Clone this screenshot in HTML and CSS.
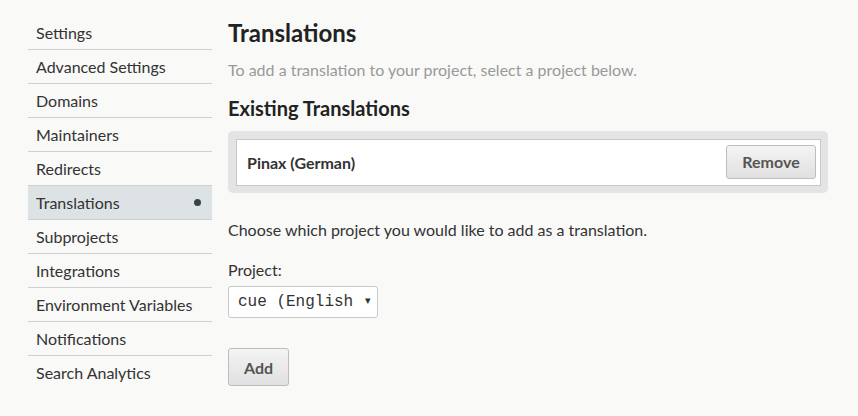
FILE: index.html
```html
<!DOCTYPE html>
<html lang="en">
<head>
    <meta charset="UTF-8">
    <title>Translations</title>
    <link rel="stylesheet" href="styles.css">
</head>
<body>
    <div class="page">
        <ul class="side-menu">
            <li><a href="#">Settings</a></li>
            <li><a href="#">Advanced Settings</a></li>
            <li><a href="#">Domains</a></li>
            <li><a href="#">Maintainers</a></li>
            <li><a href="#">Redirects</a></li>
            <li class="active"><a href="#">Translations</a></li>
            <li><a href="#">Subprojects</a></li>
            <li><a href="#">Integrations</a></li>
            <li><a href="#">Environment Variables</a></li>
            <li><a href="#">Notifications</a></li>
            <li><a href="#">Search Analytics</a></li>
        </ul>
        <div class="content">
            <h1>Translations</h1>
            <p class="help">To add a translation to your project, select a project below.</p>
            <h2>Existing Translations</h2>
            <div class="module">
                <div class="module-item">
                    <span class="item-name">Pinax (German)</span>
                    <button class="btn btn-remove">Remove</button>
                </div>
            </div>
            <p class="choose">Choose which project you would like to add as a translation.</p>
            <label for="project">Project:</label>
            <div class="select-wrap">
                <select id="project">
                    <option>cue (English)</option>
                </select>
                <span class="select-arrow">▾</span>
            </div>
            <button class="btn btn-add">Add</button>
        </div>
    </div>
</body>
</html>
```

FILE: styles.css
```css
body {
    margin: 0;
    background: #f9f9f8;
    font-family: Lato, "Open Sans", sans-serif;
    color: #333;
}
.page {
    display: flex;
    padding: 16px 30px 16px 28px;
    gap: 16px;
}
.side-menu {
    list-style: none;
    margin: 0;
    padding: 0;
    width: 184px;
    flex-shrink: 0;
}
.side-menu li {
    border-bottom: 1px solid #cfcfcf;
}
.side-menu li:last-child {
    border-bottom: none;
}
.side-menu a {
    display: block;
    height: 33px;
    line-height: 33px;
    padding: 0 8px;
    font-size: 16px;
    color: #333;
    text-decoration: none;
    position: relative;
}
.side-menu li.active a {
    background: #dde2e5;
}
.side-menu li.active a::after {
    content: "";
    position: absolute;
    right: 11px;
    top: 13px;
    width: 7px;
    height: 7px;
    border-radius: 50%;
    background: #3a4148;
}
.content {
    flex: 1;
}
h1 {
    margin: 2px 0 0;
    font-size: 24px;
    line-height: 30px;
    color: #222;
}
.help {
    margin: 12px 0 0;
    font-size: 16px;
    line-height: 20px;
    color: #999;
}
h2 {
    margin: 15px 0 0;
    font-size: 20px;
    line-height: 26px;
    color: #222;
}
.module {
    margin-top: 10px;
    background: #e4e4e4;
    border-radius: 5px;
    padding: 8px 7px 7px 8px;
}
.module-item {
    display: flex;
    align-items: center;
    justify-content: space-between;
    background: #fff;
    border: 1px solid #c8c8c8;
    height: 44px;
    padding: 0 4px 1px 10px;
}
.item-name {
    font-size: 16px;
    font-weight: bold;
}
.btn {
    font-family: Lato, "Open Sans", sans-serif;
    font-size: 16px;
    font-weight: bold;
    color: #555;
    background: linear-gradient(#f4f4f4, #e0e0e0);
    border: 1px solid #bdbdbd;
    border-radius: 3px;
    cursor: pointer;
}
.btn-remove {
    width: 90px;
    height: 34px;
    padding: 0 0 2px;
}
.choose {
    margin: 27px 0 0;
    font-size: 16px;
    line-height: 20px;
}
label {
    display: block;
    margin-top: 20px;
    font-size: 16px;
    line-height: 20px;
}
.select-wrap {
    margin-top: 6px;
    position: relative;
    width: 150px;
}
select {
    appearance: none;
    width: 150px;
    height: 32px;
    font-family: "Liberation Mono", monospace;
    font-size: 16px;
    color: #333;
    background: #fff;
    border: 1px solid #c8c8c8;
    border-radius: 3px;
    padding: 0 24px 0 9px;
}
.select-arrow {
    position: absolute;
    right: 7px;
    top: 7px;
    font-size: 11px;
    color: #333;
    pointer-events: none;
}
.btn-add {
    display: block;
    margin-top: 30px;
    height: 38px;
    width: 61px;
    padding: 0;
}
```
